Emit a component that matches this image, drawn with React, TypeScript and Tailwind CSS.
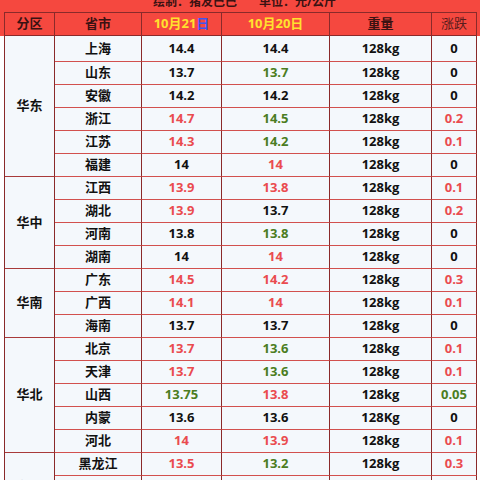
import React from 'react'

type Tone = 'k' | 'r' | 'g'

type Row = {
  city: string
  today: string
  todayTone: Tone
  prev: string
  prevTone: Tone
  weight: string
  diff: string
  diffTone: Tone
}

type Group = { region: string; rows: Row[] }

const r = (
  city: string,
  today: string,
  todayTone: Tone,
  prev: string,
  prevTone: Tone,
  diff: string,
  diffTone: Tone,
  weight = '128kg'
): Row => ({ city, today, todayTone, prev, prevTone, weight, diff, diffTone })

const groups: Group[] = [
  {
    region: '华东',
    rows: [
      r('上海', '14.4', 'k', '14.4', 'k', '0', 'k'),
      r('山东', '13.7', 'k', '13.7', 'g', '0', 'k'),
      r('安徽', '14.2', 'k', '14.2', 'k', '0', 'k'),
      r('浙江', '14.7', 'r', '14.5', 'g', '0.2', 'r'),
      r('江苏', '14.3', 'r', '14.2', 'g', '0.1', 'r'),
      r('福建', '14', 'k', '14', 'r', '0', 'k'),
    ],
  },
  {
    region: '华中',
    rows: [
      r('江西', '13.9', 'r', '13.8', 'r', '0.1', 'r'),
      r('湖北', '13.9', 'r', '13.7', 'k', '0.2', 'r'),
      r('河南', '13.8', 'k', '13.8', 'g', '0', 'k'),
      r('湖南', '14', 'k', '14', 'r', '0', 'k'),
    ],
  },
  {
    region: '华南',
    rows: [
      r('广东', '14.5', 'r', '14.2', 'r', '0.3', 'r'),
      r('广西', '14.1', 'r', '14', 'r', '0.1', 'r'),
      r('海南', '13.7', 'k', '13.7', 'k', '0', 'k'),
    ],
  },
  {
    region: '华北',
    rows: [
      r('北京', '13.7', 'r', '13.6', 'g', '0.1', 'r'),
      r('天津', '13.7', 'r', '13.6', 'g', '0.1', 'r'),
      r('山西', '13.75', 'g', '13.8', 'r', '0.05', 'g'),
      r('内蒙', '13.6', 'k', '13.6', 'k', '0', 'k', '128Kg'),
      r('河北', '14', 'r', '13.9', 'r', '0.1', 'r'),
    ],
  },
  {
    region: '东北',
    rows: [
      r('黑龙江', '13.5', 'r', '13.2', 'g', '0.3', 'r'),
      r('吉林', '13.6', 'r', '13.4', 'g', '0.2', 'r'),
      r('辽宁', '13.8', 'r', '13.6', 'g', '0.2', 'r'),
    ],
  },
]

const toneClass: Record<Tone, string> = {
  k: 'text-[#111111]',
  r: 'text-[#ea4b4f]',
  g: 'text-[#4b7d22]',
}

const cols = 'grid grid-cols-[50px_87px_80px_108px_102px_45px]'

// body cell: dark vertical rule, lighter red horizontal rule
const cell = 'flex items-center justify-center border-r border-b border-r-[#8a2a2a] border-b-[#d2504e] bg-[#f4f8fc]'
const head = 'flex items-center justify-center border-r border-b border-[#8a2a2a]'

const App = () => {
  let rowCount = 0
  return (
    <div
      className="w-[480px] h-[480px] overflow-hidden bg-white font-bold text-[13px]"
      style={{ fontFamily: '"Open Sans", "Noto Sans CJK SC", sans-serif' }}
    >
      {/* title (cut off at top) + column heads */}
      <div className="bg-[#f5483f]">
        <div className="ml-[4px] w-[473px]">
          <div className="h-[13px] border-b border-[#8a2a2a] overflow-hidden">
            <div className="-mt-[4px] flex justify-center gap-[22px] pl-[8px] text-[12px] leading-[12px] text-[#3a1212]">
              <span>绘制：猪友巴巴</span>
              <span>单位：元/公斤</span>
            </div>
          </div>
          <div className={`${cols} h-[23px] border-l border-[#8a2a2a]`}>
            <div className={`${head} text-[#3a1212]`}>分区</div>
            <div className={`${head} text-[#3a1212]`}>省市</div>
            <div className={`${head} text-[#ffe22e]`}>
              10月21<span className="text-[#3d56f0]">日</span>
            </div>
            <div className={`${head} text-[#ffe22e]`}>10月20日</div>
            <div className={`${head} text-[#3a1212]`}>重量</div>
            <div className={`${head} text-[#5a1c1c] font-normal`}>涨跌</div>
          </div>
        </div>
      </div>

      {/* data */}
      <div className={`${cols} grid-rows-[26px_repeat(20,23px)] ml-[4px] w-[473px] border-l border-[#8a2a2a]`}>
        {groups.map((g) => {
          const start = rowCount + 1
          rowCount += g.rows.length
          return (
            <React.Fragment key={g.region}>
              <div
                className="flex items-center justify-center border-r border-b border-r-[#8a2a2a] border-b-[#a83a3a] bg-[#f4f8fc] text-[#111111]"
                style={{ gridColumn: 1, gridRow: `${start} / span ${g.rows.length}` }}
              >
                {g.region}
              </div>
              {g.rows.map((row, i) => (
                <React.Fragment key={row.city}>
                  <div className={`${cell} text-[#111111]`} style={{ gridColumn: 2, gridRow: start + i }}>{row.city}</div>
                  <div className={`${cell} ${toneClass[row.todayTone]}`} style={{ gridColumn: 3, gridRow: start + i }}>{row.today}</div>
                  <div className={`${cell} ${toneClass[row.prevTone]}`} style={{ gridColumn: 4, gridRow: start + i }}>{row.prev}</div>
                  <div className={`${cell} text-[#111111]`} style={{ gridColumn: 5, gridRow: start + i }}>{row.weight}</div>
                  <div className={`${cell} ${toneClass[row.diffTone]}`} style={{ gridColumn: 6, gridRow: start + i }}>{row.diff}</div>
                </React.Fragment>
              ))}
            </React.Fragment>
          )
        })}
      </div>
    </div>
  )
}

export default App
